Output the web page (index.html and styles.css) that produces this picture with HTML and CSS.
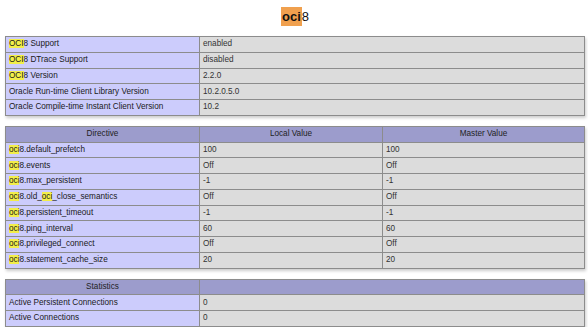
FILE: index.html
```html
<!DOCTYPE html>
<html>
<head>
<meta charset="utf-8">
<link rel="stylesheet" href="styles.css">
</head>
<body>
<div class="page">
  <h2 class="title"><span class="find">oci</span><span class="rest">8</span></h2>

  <table class="info">
    <colgroup><col class="c1"><col></colgroup>
    <tr><td class="e"><span class="hl">OCI</span>8 Support</td><td class="v">enabled</td></tr>
    <tr><td class="e"><span class="hl">OCI</span>8 DTrace Support</td><td class="v">disabled</td></tr>
    <tr><td class="e"><span class="hl">OCI</span>8 Version</td><td class="v">2.2.0</td></tr>
    <tr><td class="e">Oracle Run-time Client Library Version</td><td class="v">10.2.0.5.0</td></tr>
    <tr><td class="e">Oracle Compile-time Instant Client Version</td><td class="v">10.2</td></tr>
  </table>

  <table class="info">
    <colgroup><col class="c1"><col class="c2"><col></colgroup>
    <tr class="h"><th>Directive</th><th>Local Value</th><th>Master Value</th></tr>
    <tr><td class="e"><span class="hl">oci</span>8.default_prefetch</td><td class="v">100</td><td class="v">100</td></tr>
    <tr><td class="e"><span class="hl">oci</span>8.events</td><td class="v">Off</td><td class="v">Off</td></tr>
    <tr><td class="e"><span class="hl">oci</span>8.max_persistent</td><td class="v">-1</td><td class="v">-1</td></tr>
    <tr><td class="e"><span class="hl">oci</span>8.old_<span class="hl">oci</span>_close_semantics</td><td class="v">Off</td><td class="v">Off</td></tr>
    <tr><td class="e"><span class="hl">oci</span>8.persistent_timeout</td><td class="v">-1</td><td class="v">-1</td></tr>
    <tr><td class="e"><span class="hl">oci</span>8.ping_interval</td><td class="v">60</td><td class="v">60</td></tr>
    <tr><td class="e"><span class="hl">oci</span>8.privileged_connect</td><td class="v">Off</td><td class="v">Off</td></tr>
    <tr><td class="e"><span class="hl">oci</span>8.statement_cache_size</td><td class="v">20</td><td class="v">20</td></tr>
  </table>

  <table class="info">
    <colgroup><col class="c1"><col></colgroup>
    <tr class="h"><th>Statistics</th><th></th></tr>
    <tr><td class="e">Active Persistent Connections</td><td class="v">0</td></tr>
    <tr><td class="e">Active Connections</td><td class="v">0</td></tr>
  </table>
</div>
</body>
</html>
```

FILE: styles.css
```css
html, body {
  margin: 0;
  padding: 0;
  background: #fff;
}

.page {
  padding: 7px 3px 0 5px;
  font-family: "Liberation Sans", Arial, sans-serif;
  color: #1e1e1e;
}

.title {
  margin: 0;
  height: 29px;
  text-align: center;
  font-size: 13px;
  line-height: 19px;
  font-weight: normal;
  color: #111;
}

.title .find {
  background: #f0a04e;
  font-weight: bold;
  padding: 0 1px 0 1px;
  display: inline-block;
  line-height: 19px;
}

.title .rest {
  font-weight: normal;
}

.info {
  border-collapse: collapse;
  width: 580px;
  table-layout: fixed;
  box-shadow: 1px 2px 3px #ccc;
  margin: 0 0 10px 0;
}

.info col.c1 { width: 194px; }
.info col.c2 { width: 183px; }

.info td, .info th {
  border: 1px solid #8c8c8c;
  height: 14.75px;
  padding: 0 3px;
  font-size: 8.2px;
  line-height: 10px;
  vertical-align: middle;
  white-space: nowrap;
  overflow: hidden;
}

.info th {
  text-align: center;
  font-weight: normal;
  color: #1e1e1e;
}

.h th {
  background: #9c9ccc;
}

.e {
  background: #ccccfc;
  color: #1a1a1a;
}

.v {
  background: #dcdcdc;
  color: #333;
}

.hl {
  background: #f2ee4a;
}
```
